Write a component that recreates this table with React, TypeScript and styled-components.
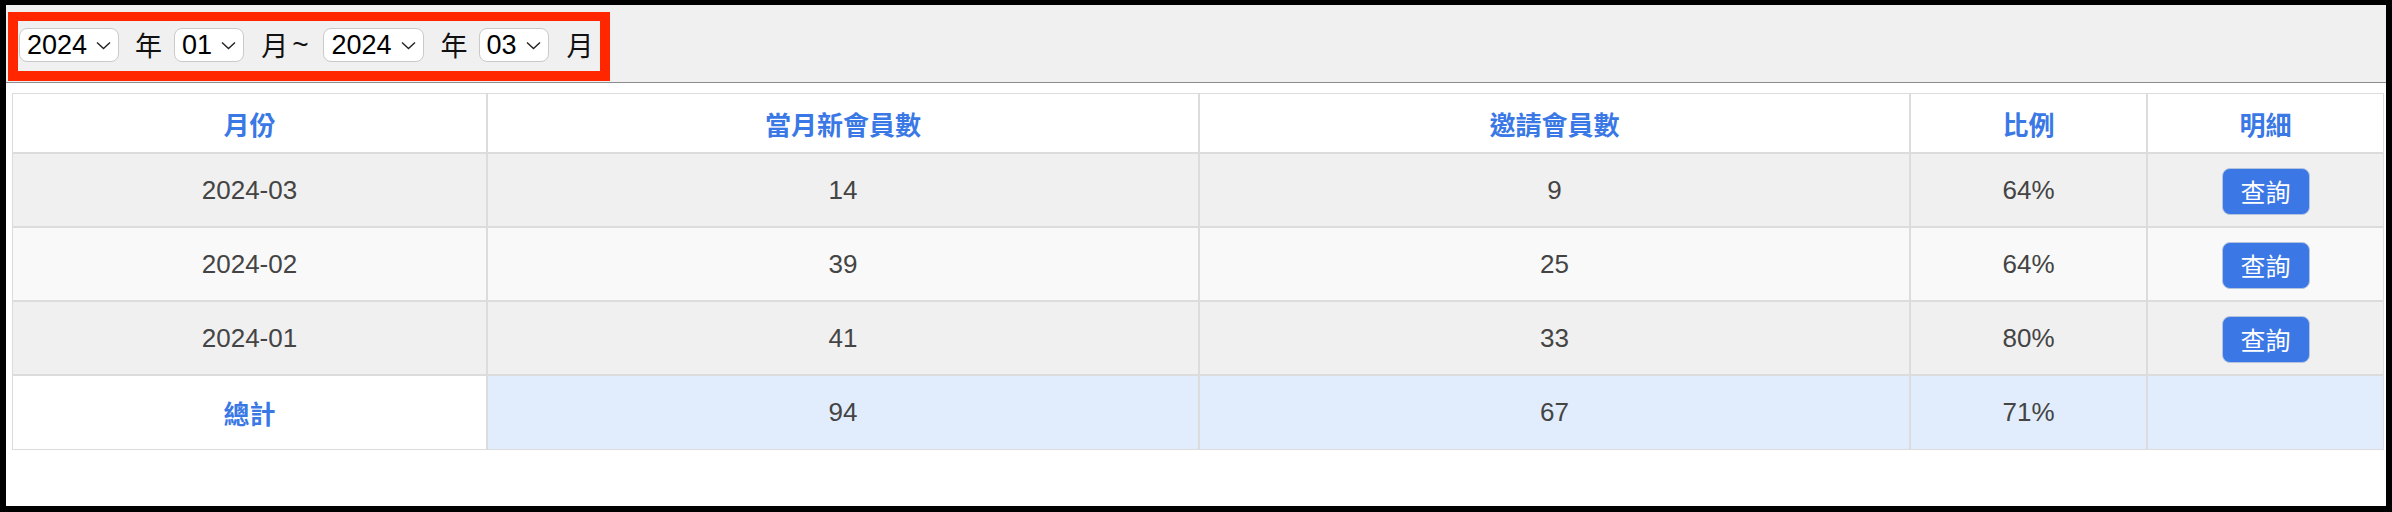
import React from "react";
import styled, { createGlobalStyle } from "styled-components";

interface IMonthRow {
  month: string;
  newMembers: number;
  invited: number;
}

const rows: IMonthRow[] = [
  { month: "2024-03", newMembers: 14, invited: 9 },
  { month: "2024-02", newMembers: 39, invited: 25 },
  { month: "2024-01", newMembers: 41, invited: 33 },
];

const GlobalStyle = createGlobalStyle`
  html, body {
    margin: 0;
    padding: 0;
    background: #000;
  }
  body {
    font-family: "Liberation Sans", "Noto Sans CJK TC", sans-serif;
  }
`;

const Frame = styled.div`
  margin: 5px 6px 6px 6px;
  height: 501px;
  background: #fff;
  overflow: hidden;
`;

const Toolbar = styled.div`
  height: 78px;
  box-sizing: border-box;
  background: #f0f0f0;
  border-bottom: 1px solid #8c8c8c;
  padding: 7px 0 0 2px;
`;

const Highlight = styled.div`
  display: inline-flex;
  align-items: center;
  box-sizing: border-box;
  height: 69px;
  border: 10px solid #ff2600;
  border-top-width: 9px;
  padding: 0 6px 2px 1px;
`;

const Picker = styled.div`
  display: inline-flex;
  align-items: center;
  gap: 9px;
  height: 34px;
  box-sizing: border-box;
  padding: 0 7px;
  background: #fff;
  border: 1px solid #cacaca;
  border-radius: 8px;
  font-size: 27px;
  color: #000;
  svg {
    display: block;
  }
`;

const Unit = styled.span<{ $before: number; $after?: number }>`
  font-family: "Noto Sans CJK TC", sans-serif;
  font-size: 27px;
  line-height: 34px;
  color: #111;
  margin-left: ${(p) => p.$before}px;
  margin-right: ${(p) => p.$after || 0}px;
`;

const Tilde = styled.span`
  margin: 0 15px 0 4px;
  font-size: 28px;
  color: #111;
`;

const Content = styled.div`
  padding: 10px 2px 0 6px;
`;

const Table = styled.table`
  width: 2372px;
  table-layout: fixed;
  border-collapse: separate;
  border-spacing: 0;
  border: 1px solid #dcdcdc;
  font-size: 26px;
  color: #444;
`;

const Th = styled.th<{ $w: number }>`
  width: ${(p) => p.$w}px;
  height: 60px;
  box-sizing: border-box;
  padding: 0;
  background: #fff;
  color: #3a78e6;
  font-family: "Noto Sans CJK TC", sans-serif;
  font-weight: 700;
  font-size: 26px;
  text-align: center;
  vertical-align: middle;
  border-bottom: 2px solid #dcdcdc;
  & + & {
    border-left: 2px solid #dcdcdc;
  }
`;

const Row = styled.tr<{ $shade: string }>`
  td {
    background: ${(p) => p.$shade};
  }
`;

const Td = styled.td<{ $last?: boolean }>`
  height: ${(p) => (p.$last ? 73 : 72)}px;
  box-sizing: content-box;
  padding: 0;
  text-align: center;
  vertical-align: middle;
  border-bottom: ${(p) => (p.$last ? "none" : "2px solid #dcdcdc")};
  & + & {
    border-left: 2px solid #dcdcdc;
  }
`;

const TotalLabel = styled(Td)`
  && {
    background: #fff;
  }
  color: #3a78e6;
  font-family: "Noto Sans CJK TC", sans-serif;
  font-weight: 700;
  font-size: 26px;
`;

const QueryButton = styled.button`
  width: 88px;
  height: 47px;
  margin-top: 2px;
  box-sizing: border-box;
  border: 1px solid #b4c3de;
  border-radius: 8px;
  background: #3b78e6;
  color: #fff;
  font-family: "Noto Sans CJK TC", sans-serif;
  font-size: 25px;
  padding: 0;
  cursor: pointer;
`;

const Chevron = () => (
  <svg width="15" height="9" viewBox="0 0 15 9">
    <polyline
      points="1,1.5 7.5,7.5 14,1.5"
      fill="none"
      stroke="#222"
      strokeWidth="1.4"
    />
  </svg>
);

const Select = ({ value }: { value: string }) => (
  <Picker>
    <span>{value}</span>
    <Chevron />
  </Picker>
);

const ratio = (a: number, b: number) => Math.round((b / a) * 100) + "%";

export default function App() {
  const totalNew = rows.reduce((s, r) => s + r.newMembers, 0);
  const totalInvited = rows.reduce((s, r) => s + r.invited, 0);
  return (
    <>
      <GlobalStyle />
      <Frame>
        <Toolbar>
          <Highlight>
            <Select value="2024" />
            <Unit $before={16} $after={12}>年</Unit>
            <Select value="01" />
            <Unit $before={17}>月</Unit>
            <Tilde>~</Tilde>
            <Select value="2024" />
            <Unit $before={17} $after={11}>年</Unit>
            <Select value="03" />
            <Unit $before={18}>月</Unit>
          </Highlight>
        </Toolbar>
        <Content>
          <Table>
            <thead>
              <tr>
                <Th $w={473}>月份</Th>
                <Th $w={712}>當月新會員數</Th>
                <Th $w={711}>邀請會員數</Th>
                <Th $w={237}>比例</Th>
                <Th $w={237}>明細</Th>
              </tr>
            </thead>
            <tbody>
              {rows.map((r, i) => (
                <Row key={r.month} $shade={i % 2 === 1 ? "#f9f9f9" : "#f0f0f0"}>
                  <Td>{r.month}</Td>
                  <Td>{r.newMembers}</Td>
                  <Td>{r.invited}</Td>
                  <Td>{ratio(r.newMembers, r.invited)}</Td>
                  <Td>
                    <QueryButton>查詢</QueryButton>
                  </Td>
                </Row>
              ))}
              <Row $shade="#e1edfd">
                <TotalLabel $last>總計</TotalLabel>
                <Td $last>{totalNew}</Td>
                <Td $last>{totalInvited}</Td>
                <Td $last>{ratio(totalNew, totalInvited)}</Td>
                <Td $last></Td>
              </Row>
            </tbody>
          </Table>
        </Content>
      </Frame>
    </>
  );
}
